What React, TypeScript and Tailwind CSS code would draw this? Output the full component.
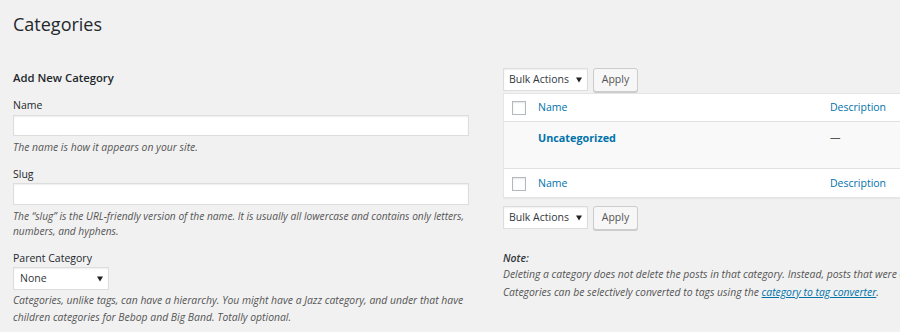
import React from "react";

const font = { fontFamily: '"Open Sans", "Noto Sans", sans-serif' };

function Checkbox() {
  return <span className="block w-[14px] h-[14px] bg-white border border-[#b4b9be] shadow-[inset_0_1px_2px_rgba(0,0,0,0.1)]" />;
}

function Select({ label, w, arrowPad }: { label: string; w: string; arrowPad: string }) {
  return (
    <div className={`${w} h-[23px] bg-white border border-[#ddd] shadow-[inset_0_1px_2px_rgba(0,0,0,0.07)] flex items-center justify-between pl-[5px] ${arrowPad} text-[10.5px] text-[#32373c]`}>
      <span>{label}</span>
      <svg width="6" height="6" viewBox="0 0 6 6"><path d="M0 0.5h6L3 5.5z" fill="#222" /></svg>
    </div>
  );
}

function Apply() {
  return (
    <div className="w-[45px] h-[24px] bg-[#f7f7f7] border border-[#ccc] rounded-[3px] shadow-[0_1px_0_#ccc] flex items-center justify-center text-[10.5px] text-[#555]">
      Apply
    </div>
  );
}

export default function App() {
  return (
    <div className="w-[900px] h-[332px] overflow-hidden bg-[#f1f1f1] text-[#444]" style={font}>
      <div className="h-[50px] pl-[13px] pt-[12px] text-[18px] leading-[24px] text-[#23282d]">Categories</div>
      <div className="flex">
        <div className="ml-[13px] w-[456px] shrink-0 flex flex-col">
          <div className="mt-[18px] text-[11.3px] leading-[20px] font-semibold text-[#23282d]">Add New Category</div>
          <div className="mt-[8px] text-[10.5px] leading-[18px] text-[#23282d]">Name</div>
          <div className="mt-[1px] h-[21px] bg-white border border-[#ddd] shadow-[inset_0_1px_2px_rgba(0,0,0,0.07)]" />
          <div className="mt-[2px] text-[10.4px] leading-[18px] italic text-[#555]">The name is how it appears on your site.</div>
          <div className="mt-[9px] text-[10.5px] leading-[18px] text-[#23282d]">Slug</div>
          <div className="mt-0 h-[22px] bg-white border border-[#ddd] shadow-[inset_0_1px_2px_rgba(0,0,0,0.07)]" />
          <div className="mt-[4px] text-[10.2px] leading-[15px] italic text-[#555]">
            The &ldquo;slug&rdquo; is the URL-friendly version of the name. It is usually all lowercase and contains only letters, numbers, and hyphens.
          </div>
          <div className="mt-[10px] text-[10.5px] leading-[18px] text-[#23282d]">Parent Category</div>
          <div className="mt-0">
            <Select label="None" w="w-[96px]" arrowPad="pr-[5px] pl-[6px]" />
          </div>
          <div className="mt-[2px] text-[10.4px] leading-[17px] italic text-[#555]">
            Categories, unlike tags, can have a hierarchy. You might have a Jazz category, and under that have children categories for Bebop and Big Band. Totally optional.
          </div>
        </div>
        <div className="ml-[34px] w-[420px] shrink-0 flex flex-col">
          <div className="mt-[18px] flex gap-[5px]">
            <Select label="Bulk Actions" w="w-[85px]" arrowPad="pr-[5px]" />
            <Apply />
          </div>
          <div className="mt-[1px] w-[520px] bg-white border border-[#e5e5e5] shadow-[0_1px_1px_rgba(0,0,0,0.04)] text-[10.5px]">
            <div className="h-[28px] flex items-center border-b border-[#e1e1e1] pt-[1px]">
              <div className="w-[34px] pl-[8px]"><Checkbox /></div>
              <div className="w-[292px] text-[#0073aa]">Name</div>
              <div className="text-[#0073aa]">Description</div>
            </div>
            <div className="h-[46px] flex items-start bg-[#f9f9f9] pt-[8px]">
              <div className="w-[34px]" />
              <div className="w-[292px] text-[#0073aa] font-bold text-[10.8px]">Uncategorized</div>
              <div className="text-[#555]">—</div>
            </div>
            <div className="h-[29px] flex items-center border-t border-[#e1e1e1] pt-[1px]">
              <div className="w-[34px] pl-[8px]"><Checkbox /></div>
              <div className="w-[292px] text-[#0073aa]">Name</div>
              <div className="text-[#0073aa]">Description</div>
            </div>
          </div>
          <div className="mt-[8px] flex gap-[5px]">
            <Select label="Bulk Actions" w="w-[85px]" arrowPad="pr-[5px]" />
            <Apply />
          </div>
          <div className="mt-[20px] text-[10.4px] leading-[16px] italic text-[#555] whitespace-nowrap">
            <div className="font-semibold text-[#32373c]">Note:</div>
            <div>Deleting a category does not delete the posts in that category. Instead, posts that were only assigned to the deleted category are set to the category Uncategorized.</div>
            <div className="mt-[2px]">
              Categories can be selectively converted to tags using the{" "}
              <span className="text-[#0073aa] underline">category to tag converter</span>.
            </div>
          </div>
        </div>
      </div>
    </div>
  );
}
